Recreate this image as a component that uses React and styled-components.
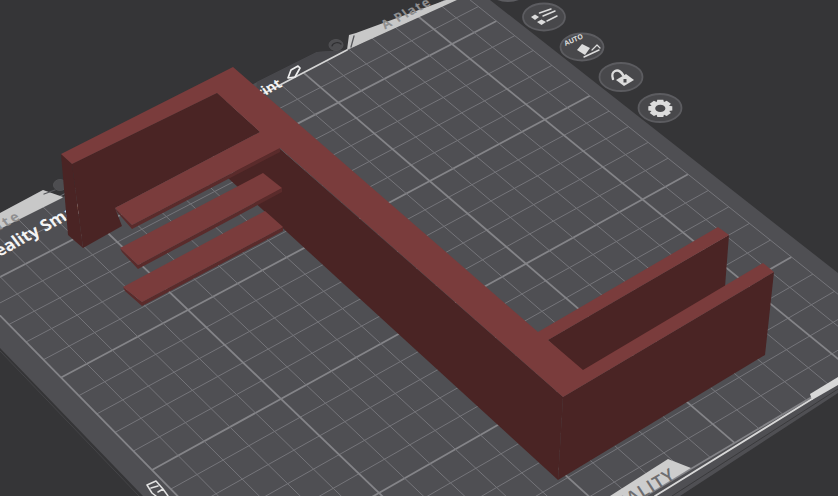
import React from "react";
import styled, { createGlobalStyle } from "styled-components";

const Reset = createGlobalStyle`
  html, body { margin: 0; padding: 0; background: #353537; overflow: hidden; }
`;

const Stage = styled.main`
  width: 838px;
  height: 496px;
  background: #353537;
  overflow: hidden;
`;

const Scene = styled.svg`
  display: block;
  width: 838px;
  height: 496px;
`;

const Face = styled.polygon`
  fill: ${(p) => p.$fill};
`;

const GridLine = styled.line`
  stroke: ${(p) => (p.$major ? "#848488" : "#75757a")};
  stroke-width: ${(p) => (p.$major ? 1.8 : 1)};
`;

const Stroke = styled.path`
  fill: none;
  stroke: ${(p) => p.$color || "#e6e6e6"};
  stroke-width: ${(p) => p.$w || 1.5};
  stroke-linecap: round;
  stroke-linejoin: round;
`;

const PlateText = styled.text`
  font-family: "Open Sans", "Liberation Sans", sans-serif;
  font-weight: ${(p) => p.$weight || 700};
  font-size: ${(p) => p.$size}px;
  letter-spacing: ${(p) => p.$track || 0}px;
  fill: ${(p) => p.$color};
`;

const Ring = styled.ellipse`
  fill: ${(p) => p.$fill || "#48484b"};
  stroke: ${(p) => p.$line || "#5c5c60"};
  stroke-width: ${(p) => p.$w || 1.8};
`;

const Mark = styled.path`
  fill: ${(p) => p.$fill || "#dcdcdc"};
`;

function solve(A, b) {
  const n = b.length;
  const M = A.map((r, i) => [...r, b[i]]);
  for (let c = 0; c < n; c++) {
    let best = c;
    for (let r = c + 1; r < n; r++) if (Math.abs(M[r][c]) > Math.abs(M[best][c])) best = r;
    [M[c], M[best]] = [M[best], M[c]];
    for (let r = 0; r < n; r++) {
      if (r === c) continue;
      const f = M[r][c] / M[c][c];
      for (let k = c; k <= n; k++) M[r][k] -= f * M[c][k];
    }
  }
  return M.map((r, i) => r[n] / r[i]);
}

const controls = [
  [0, 0, -25, 290],
  [0, 20, 452, 44],
  [10, 0, 152, 470],
  [20, 20, 854, 372],
];
const hA = [];
const hB = [];
controls.forEach(([u, v, x, y]) => {
  hA.push([u, v, 1, 0, 0, 0, -u * x, -v * x]);
  hB.push(x);
  hA.push([0, 0, 0, u, v, 1, -u * y, -v * y]);
  hB.push(y);
});
const h = solve(hA, hB);
const project = (u, v) => {
  const w = h[6] * u + h[7] * v + 1;
  return [(h[0] * u + h[1] * v + h[2]) / w, (h[3] * u + h[4] * v + h[5]) / w];
};

const U_MIN = -2;
const U_MAX = 20;
const V_MAX = 22;
const range = (a, b) => Array.from({ length: b - a + 1 }, (_, i) => a + i);

const gridLines = [
  ...range(U_MIN, U_MAX).map((u) => ({
    key: `u${u}`,
    major: u % 5 === 0,
    a: project(u, 0),
    b: project(u, V_MAX),
  })),
  ...range(0, V_MAX).map((v) => ({
    key: `v${v}`,
    major: v % 5 === 0,
    a: project(U_MIN, v),
    b: project(U_MAX, v),
  })),
];

const TOP = "#7a3c3c";
const SIDE = "#4a2424";
const LIP = "#5a2b2b";

const gearTeeth = range(0, 7).map((i) => i * 45);

export default function App() {
  return (
    <Stage>
      <Reset />
      <Scene viewBox="0 0 838 496" xmlns="http://www.w3.org/2000/svg">
        {/* plate */}
        <Face
          $fill="#4f4f53"
          points="0,213 43,190 63,197 257,82 317,52 347,50 457,0 490,0 838,273 838,393 680,496 143,496 0,348"
        />
        <Stroke d="M0 351 L139 496" $color="#444447" $w={1} />
        <Stroke d="M838 389 L672 496" $color="#3a3a3c" $w={1} />

        {gridLines.map((l) => (
          <GridLine key={l.key} $major={l.major} x1={l.a[0]} y1={l.a[1]} x2={l.b[0]} y2={l.b[1]} />
        ))}

        {/* upper frame with the screw and the tab */}
        <Face $fill="#47474b" points="255,98 257,82 317,52 348,50 347,51" />
        <Ring cx={336} cy={45} rx={7} ry={5.5} $fill="#4d4d50" $line="#515154" $w={1} />
        <Stroke d="M332 46 C333 42 339 42 341 44" $color="#2f2f31" $w={1.2} />
        <Stroke d="M255 98 L347 50" $color="#d4d4d4" $w={1.7} />
        <Face $fill="#c8c8c8" points="347,50 349,35 356,33 446,0 457,0" />
        <Stroke d="M351 47 L354 36" $color="#55565a" $w={1.3} />
        <PlateText $size={13} $color="#8f8f90" $track={1.2} transform="matrix(0.88 -0.47 0.6 0.8 385 29.5)">
          A Plate
        </PlateText>

        {/* left tab and left label */}
        <Face $fill="#c8c8c8" points="0,213 43,190 63,197 62,198 0,229" />
        <Stroke d="M44 194 L55 190" $color="#55565a" $w={1.3} />
        <Ring cx={60} cy={185} rx={6.5} ry={5.5} $fill="#4d4d50" $line="#515154" $w={1} />
        <PlateText $size={14} $color="#8f8f90" $track={2.5} textAnchor="end" transform="matrix(0.88 -0.47 0.6 0.8 23 218)">
          Plate
        </PlateText>
        <PlateText $size={17} $color="#f4f4f4" transform="matrix(0.88 -0.48 0.6 0.8 -17 266)">
          Creality Smart
        </PlateText>
        <PlateText $size={14} $color="#f4f4f4" textAnchor="end" transform="matrix(0.88 -0.48 0.6 0.8 283 86)">
          Print
        </PlateText>
        <Stroke d="M288 78 L291 70 L298 66 L300 68 L295 77 Z" $color="#efefef" $w={1.7} />

        {/* bottom frame */}
        <Stroke d="M655 496 L812 399" $color="#d8d8d8" $w={1.8} />
        <Face $fill="#d8d8d8" points="810,394 838,377 838,385 812,400" />
        <Face $fill="#cdcdcd" points="668,459 691,468 645,496 610,496" />
        <PlateText $size={18} $weight={600} $track={1} $color="#6d6d70" textAnchor="end" transform="matrix(0.86 -0.51 0.55 0.84 677 478)">
          CREALITY
        </PlateText>
        <Stroke d="M147 485 L156 481 L163 489 L168 496 M147 485 L152 493 L156 496 M151 488 L158 486 M158 492 L163 489" $color="#e2e2e2" $w={1.5} />

        {/* model */}
        <Face $fill={SIDE} points="61,154 72,164 83,248 68,235" />
        <Face $fill={SIDE} points="72,164 217,93 260,132 115,208 122,226 83,248" />
        <Face $fill={SIDE} points="270,140 563,397 558,480 228,178" />
        <Face $fill={SIDE} points="548,340 729,235 725,287 583,372" />
        <Face $fill={SIDE} points="563,397 774,272 765,355 558,480" />
        <Face $fill={LIP} points="115,208 117,212 132,229 280,152 280,148 132,225" />
        <Face $fill={LIP} points="120,248 122,252 138,269 282,192 282,188 138,265" />
        <Face $fill={LIP} points="123,287 125,291 142,306 283,231 283,227 142,302" />
        <Face $fill={TOP} points="120,248 263,173 282,188 138,265" />
        <Face $fill={TOP} points="123,287 265,211 283,227 142,302" />
        <Face
          $fill={TOP}
          points="61,154 233,67 538,332 718,227 729,235 548,340 583,370 763,263 774,272 563,397 280,148 132,225 115,208 260,132 217,93 72,164"
        />

        {/* side buttons */}
        <Ring cx={508} cy={-13} rx={21} ry={14} />
        <Ring cx={544} cy={17} rx={21} ry={13.5} />
        <Ring cx={582} cy={47} rx={21.5} ry={13.5} />
        <Ring cx={621} cy={77} rx={21.5} ry={14} />
        <Ring cx={660} cy={108} rx={21.5} ry={14} />

        <Mark d="M531 17 L535 14.5 L539 17 L535 20 Z" />
        <Mark d="M537 22 L541.5 19.5 L546 22 L541.5 25 Z" />
        <Stroke d="M539.5 13 L551 9 M543 16 L555 11 M547 21 L557 16" $color="#dcdcdc" $w={1.5} />

        <PlateText $size={7} $color="#dcdcdc" transform="matrix(0.92 -0.4 0.4 0.92 565.5 46)">
          AUTO
        </PlateText>
        <Mark d="M577 50 L582 44 L590 48 L585 55 Z" />
        <Stroke d="M584 57 L599 50" $color="#dcdcdc" $w={1.4} />
        <Stroke d="M592 50 L597 45 L600 48" $color="#dcdcdc" $w={1.2} />

        <Stroke d="M613 79 C610 71 618 67 623 75" $color="#dcdcdc" $w={2.4} />
        <Mark d="M616 80 L626 74 L634 80 L624 86 Z" />
        <Mark d="M623.5 79 L626.5 79 L626.5 82.5 L623.5 82.5 Z" $fill="#48484b" />

        <g transform="translate(660.3 108.3) scale(1 0.72)">
          {gearTeeth.map((deg) => (
            <Mark key={deg} d="M-3 -12 L3 -12 L4 -7 L-4 -7 Z" transform={`rotate(${deg})`} />
          ))}
          <Ring cx={0} cy={0} rx={7.2} ry={7.2} $fill="none" $line="#dcdcdc" $w={4.2} />
        </g>
      </Scene>
    </Stage>
  );
}
